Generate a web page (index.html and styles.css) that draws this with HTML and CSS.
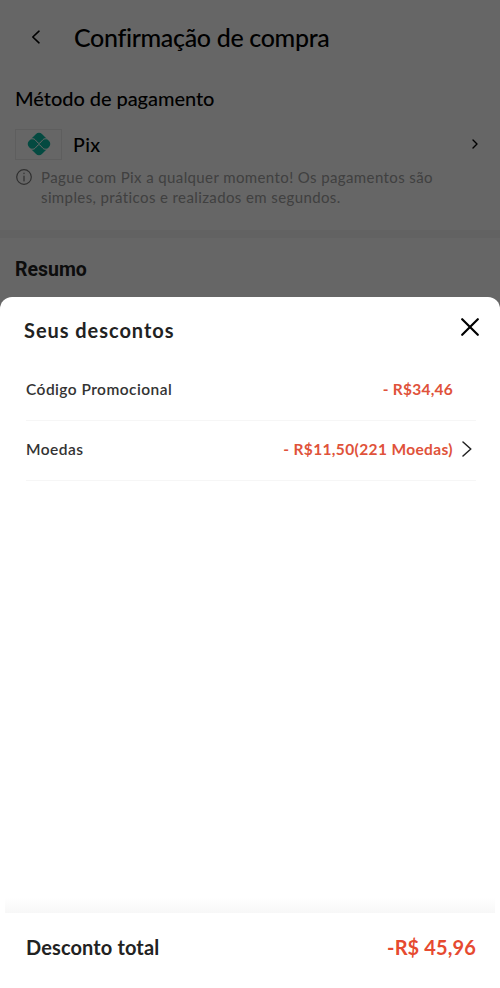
FILE: index.html
```
<!DOCTYPE html>
<html lang="pt-BR">
<head>
    <meta charset="UTF-8">
    <meta name="viewport" content="width=device-width, initial-scale=1.0">
    <title>Confirmação de compra</title>
    <link rel="stylesheet" href="styles.css">
</head>
<body>
    <div class="page">
        <header class="page-header">
            <svg class="back" width="10" height="14" viewBox="0 0 10 14"><path d="M8 1.2 1.8 7 8 12.8"/></svg>
            <h1>Confirmação de compra</h1>
        </header>

        <section class="payment">
            <h2>Método de pagamento</h2>
            <div class="method">
                <span class="method-logo">
                    <svg width="24" height="24" viewBox="0 0 24 24">
                        <rect x="2.8" y="2.8" width="18.4" height="18.4" rx="4.2" transform="rotate(45 12 12)"/>
                        <path d="M2 6.8h4c.9 0 1.4.3 2 .9l3.2 3.4q.8.8 1.6 0L16 7.7c.6-.6 1.1-.9 2-.9h4M2 17.2h4c.9 0 1.4-.3 2-.9l3.2-3.4q.8-.8 1.6 0l3.2 3.4c.6.6 1.1.9 2 .9h4" class="logo-gap"/>
                    </svg>
                </span>
                <span class="method-name">Pix</span>
                <svg class="method-arrow" width="6" height="10" viewBox="0 0 6 10"><path d="m1 1 4 4-4 4"/></svg>
            </div>
            <div class="info">
                <svg width="16" height="16" viewBox="0 0 16 16"><circle cx="8" cy="8" r="7.3"/><path d="M8 7v5M8 4v.6"/></svg>
                <p>Pague com Pix a qualquer momento! Os pagamentos são<br>simples, práticos e realizados em segundos.</p>
            </div>
        </section>

        <section class="summary">
            <h2>Resumo</h2>
        </section>
    </div>

    <div class="overlay">
        <div class="sheet">
            <div class="sheet-header">
                <h2>Seus descontos</h2>
                <svg class="close" width="18" height="18" viewBox="0 0 18 18"><path d="m1.2 1.2 15.6 15.6M16.8 1.2 1.2 16.8"/></svg>
            </div>
            <div class="discounts">
                <div class="discount">
                    <span class="label">Código Promocional</span>
                    <span class="value promo">- R$34,46</span>
                </div>
                <div class="discount">
                    <span class="label">Moedas</span>
                    <span class="value coins">- R$11,50(221 Moedas)</span>
                    <svg class="discount-arrow" width="10" height="16" viewBox="0 0 10 16"><path d="m1 1 7.8 7L1 15"/></svg>
                </div>
            </div>
            <div class="total-shadow"></div>
            <div class="total">
                <span class="total-label">Desconto total</span>
                <span class="total-value">-R$ 45,96</span>
            </div>
        </div>
    </div>
</body>
</html>
```

FILE: styles.css
```
* {
    box-sizing: border-box;
}
body {
    margin: 0;
    height: 988px;
    overflow: hidden;
    position: relative;
    font-family: Lato, "Open Sans", sans-serif;
    font-variant-ligatures: none;
    color: #000;
    background-color: #fff;
}
h1, h2, p {
    margin: 0;
}
svg {
    display: block;
    flex-shrink: 0;
    fill: none;
    stroke: #000;
    stroke-linecap: round;
    stroke-linejoin: round;
}
.page-header {
    display: flex;
    align-items: center;
    height: 74px;
    padding-left: 31px;
}
.back {
    stroke-width: 1.6;
}
h1 {
    margin-left: 33px;
    font-size: 25px;
    font-weight: 500;
    line-height: 30px;
    letter-spacing: -0.33px;
}
.payment {
    height: 156px;
    padding: 11px 22px 0 15px;
}
.payment h2 {
    font-size: 20px;
    font-weight: 500;
    line-height: 26px;
    letter-spacing: -0.05px;
}
.method {
    display: flex;
    align-items: center;
    height: 32px;
    margin-top: 17px;
}
.method-logo {
    display: flex;
    align-items: center;
    justify-content: center;
    width: 47px;
    height: 31px;
    border: 1px solid #ececec;
}
.method-logo rect {
    fill: #0cbaa4;
    stroke: none;
}
.method-logo .logo-gap {
    stroke: #fff;
    stroke-width: 1;
}
.method-name {
    margin-left: 11px;
    font-size: 19.5px;
    font-weight: 500;
    letter-spacing: 0.4px;
}
.method-arrow {
    margin-left: auto;
    stroke-width: 1.4;
}
.info {
    display: flex;
    gap: 9px;
    margin-top: 9px;
    padding-left: 1px;
    font-size: 15px;
    line-height: 20px;
    letter-spacing: 0.39px;
    color: #a0a0a0;
}
.info svg {
    stroke: #777;
    stroke-width: 1.2;
}
.info p {
    margin-top: -2px;
}
.summary {
    border-top: 8px solid #f4f4f4;
    padding: 20px 15px;
}
.summary h2 {
    font-family: Roboto, sans-serif;
    font-size: 19.5px;
    font-weight: 700;
    line-height: 24px;
    color: #222;
}
.overlay {
    position: absolute;
    inset: 0;
    padding-top: 297px;
    background-color: rgba(0, 0, 0, 0.6);
}
.sheet {
    display: flex;
    flex-direction: column;
    height: 691px;
    border-radius: 12px 12px 0 0;
    background-color: #fff;
    color: #222;
}
.sheet-header {
    display: flex;
    justify-content: space-between;
    height: 62px;
    padding: 21px 21px 0 24px;
}
.sheet-header h2 {
    margin-top: -1px;
    font-size: 20px;
    font-weight: 700;
    line-height: 26px;
    letter-spacing: 0.95px;
}
.close {
    stroke-width: 2.2;
}
.discounts {
    flex: 1;
    padding: 2px 24px 0 26px;
}
.discount {
    display: flex;
    align-items: center;
    height: 60px;
    padding: 0 4px 4px 0;
    border-bottom: 1px solid #f6f6f6;
    font-size: 15.5px;
    line-height: 20px;
    letter-spacing: 0.45px;
}
.label {
    font-weight: 600;
    color: #333;
}
.value {
    margin-left: auto;
    font-weight: 700;
    color: #e0523a;
}
.promo {
    margin-right: 19px;
    letter-spacing: 0.25px;
}
.coins {
    letter-spacing: 0.37px;
}
.discount-arrow {
    margin-left: 9px;
    stroke: #222;
    stroke-width: 1.5;
}
.total-shadow {
    height: 16px;
    margin: 0 5px;
    background-image: linear-gradient(#fff, #f7f7f7);
}
.total {
    display: flex;
    justify-content: space-between;
    height: 75px;
    padding: 21px 24px 0 26px;
    font-size: 20px;
    font-weight: 700;
    line-height: 26px;
    letter-spacing: 0.12px;
}
.total-value {
    color: #e64a30;
}
```
